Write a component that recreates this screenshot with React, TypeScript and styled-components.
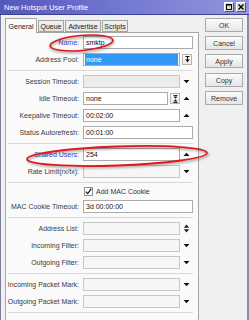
import * as React from "react";
import styled, { createGlobalStyle } from "styled-components";

const GlobalStyle = createGlobalStyle`
  html, body {
    margin: 0;
    padding: 0;
    background: #f0f0f0;
  }
  body {
    font-family: "Liberation Sans", Arial, sans-serif;
  }
`;

type Arrow = "down" | "up" | "updown" | "none";

interface FieldDef {
  label: string;
  value?: string;
  arrow?: Arrow;
  full?: boolean;
  empty?: boolean;
  dark?: boolean;
  highlight?: boolean;
  selected?: boolean;
  dropButton?: boolean;
  idleButton?: boolean;
}

type Item = FieldDef | "sep" | "check";

const tabs = [
  { name: "General", width: 32 },
  { name: "Queue", width: 26 },
  { name: "Advertise", width: 36 },
  { name: "Scripts", width: 26 },
];

const items: Item[] = [
  { label: "Name:", value: "smktp", full: true, highlight: true },
  { label: "Address Pool:", value: "none", selected: true, dropButton: true },
  "sep",
  { label: "Session Timeout:", arrow: "down", empty: true, dark: true },
  { label: "Idle Timeout:", value: "none", idleButton: true, arrow: "up" },
  { label: "Keepalive Timeout:", value: "00:02:00", arrow: "up" },
  { label: "Status Autorefresh:", value: "00:01:00", full: true },
  "sep",
  { label: "Shared Users:", value: "254", arrow: "up", highlight: true },
  { label: "Rate Limit(rx/tx):", arrow: "down", empty: true },
  "sep",
  "check",
  { label: "MAC Cookie Timeout:", value: "3d 00:00:00", full: true },
  "sep",
  { label: "Address List:", arrow: "updown", empty: true },
  { label: "Incoming Filter:", arrow: "down", empty: true },
  { label: "Outgoing Filter:", arrow: "down", empty: true },
  "sep",
  { label: "Incoming Packet Mark:", arrow: "down", empty: true },
  { label: "Outgoing Packet Mark:", arrow: "down", empty: true },
  "sep",
];

function ArrowGlyph({ kind }: { kind: Arrow }) {
  if (kind === "down") {
    return (
      <svg width="7" height="5" viewBox="0 0 7 5">
        <path d="M0.5 1h6L3.5 4.2z" fill="#111" />
      </svg>
    );
  }
  if (kind === "up") {
    return (
      <svg width="7" height="5" viewBox="0 0 7 5">
        <path d="M0.5 4h6L3.5 0.8z" fill="#111" />
      </svg>
    );
  }
  if (kind === "updown") {
    return (
      <svg width="7" height="9" viewBox="0 0 7 9">
        <path d="M0.8 3.8h5.4L3.5 0.6z M0.8 5.2h5.4L3.5 8.4z" fill="#222" />
      </svg>
    );
  }
  return null;
}

function DropGlyph() {
  return (
    <svg width="7" height="7" viewBox="0 0 7 7">
      <path d="M1.5 0.5h4" stroke="#111" strokeWidth="1" />
      <path d="M3.5 1v3" stroke="#111" strokeWidth="1" />
      <path d="M1.2 3.5h4.6L3.5 6.3z" fill="#111" />
    </svg>
  );
}

function SpinGlyph() {
  return (
    <svg width="7" height="8" viewBox="0 0 7 8">
      <path d="M1.5 0.5h4" stroke="#111" strokeWidth="0.9" />
      <path d="M1.6 1.6h3.8L3.5 3.8z" fill="#111" />
      <path d="M1.6 6.4h3.8L3.5 4.2z" fill="#111" />
      <path d="M1.5 7.5h4" stroke="#111" strokeWidth="0.9" />
    </svg>
  );
}

export default function App() {
  return (
    <>
      <GlobalStyle />
      <Window>
        <TitleBar>
          <TitleText>New Hotspot User Profile</TitleText>
          <TitleButtons>
            <CaptionButton>
              <svg width="6" height="6" viewBox="0 0 6 6">
                <path d="M0.5 0.5h5v5h-5z" fill="none" stroke="#000" strokeWidth="1" />
                <path d="M0 1h6" stroke="#000" strokeWidth="1" />
              </svg>
            </CaptionButton>
            <CaptionButton>
              <svg width="6" height="6" viewBox="0 0 6 6">
                <path d="M0.5 0.5l5 5M5.5 0.5l-5 5" stroke="#000" strokeWidth="1.4" />
              </svg>
            </CaptionButton>
          </TitleButtons>
        </TitleBar>
        <Body>
          <Main>
            <TabStrip>
              {tabs.map((t, i) => (
                <Tab key={t.name} $active={i === 0} $w={t.width}>
                  {t.name}
                </Tab>
              ))}
            </TabStrip>
            <Panel>
              {items.map((item, i) => {
                if (item === "sep") return <Separator key={i} />;
                if (item === "check") {
                  return (
                    <CheckRow key={i}>
                      <CheckBox>
                        <svg width="7" height="7" viewBox="0 0 7 7">
                          <path d="M0.8 3.6l1.9 2 3.6-5" fill="none" stroke="#111" strokeWidth="1.2" />
                        </svg>
                      </CheckBox>
                      <CheckLabel>Add MAC Cookie</CheckLabel>
                    </CheckRow>
                  );
                }
                const f = item;
                return (
                  <Row key={i}>
                    <Label $highlight={f.highlight}>{f.label}</Label>
                    <Input
                      $width={f.full ? 110 : f.idleButton ? 85 : 97}
                      $empty={f.empty}
                      $dark={f.dark}
                    >
                      {f.value && <Value $selected={f.selected}>{f.value}</Value>}
                    </Input>
                    {f.dropButton && (
                      <SmallButton>
                        <DropGlyph />
                      </SmallButton>
                    )}
                    {f.idleButton && (
                      <SmallButton>
                        <SpinGlyph />
                      </SmallButton>
                    )}
                    {f.arrow && (
                      <ArrowCell>
                        <ArrowGlyph kind={f.arrow} />
                      </ArrowCell>
                    )}
                  </Row>
                );
              })}
            </Panel>
          </Main>
          <Side>
            <SideButton>OK</SideButton>
            <SideButton>Cancel</SideButton>
            <SideButton>Apply</SideButton>
            <SideButton $spaced>Copy</SideButton>
            <SideButton>Remove</SideButton>
          </Side>
        </Body>
        <Marks width="249" height="320" viewBox="0 0 249 320">
          <defs>
            <filter id="markShadow" x="-20%" y="-50%" width="140%" height="200%">
              <feGaussianBlur stdDeviation="1.2" />
            </filter>
          </defs>
          <g fill="none" strokeLinecap="round">
            <ellipse cx="82" cy="44.5" rx="31.5" ry="7.5" transform="rotate(-5 82 44.5)" stroke="rgba(0,0,0,0.35)" strokeWidth="2" filter="url(#markShadow)" />
            <ellipse cx="81.5" cy="43" rx="31.5" ry="7.5" transform="rotate(-5 81.5 43)" stroke="#e3161b" strokeWidth="1.6" />
            <ellipse cx="118" cy="157.5" rx="90" ry="9.5" transform="rotate(-2 118 157.5)" stroke="rgba(0,0,0,0.35)" strokeWidth="2" filter="url(#markShadow)" />
            <ellipse cx="117" cy="156" rx="90" ry="9.5" transform="rotate(-2 117 156)" stroke="#e3161b" strokeWidth="1.8" />
          </g>
        </Marks>
      </Window>
    </>
  );
}

const Window = styled.div`
  position: relative;
  box-sizing: border-box;
  width: 249px;
  height: 320px;
  overflow: hidden;
  display: flex;
  flex-direction: column;
  background: #f0f0f0;
  box-shadow: inset 1px 0 0 #7c7c9c, inset -2px 0 0 #8a8aa6;
  font-family: "Liberation Sans", Arial, sans-serif;
  font-size: 7px;
  color: #333;
`;

const TitleBar = styled.div`
  box-sizing: border-box;
  height: 15px;
  flex: none;
  display: flex;
  align-items: center;
  padding: 0 3px 0 4px;
  background: linear-gradient(to right, #5257bd, #777cd3 55%, #9196dd);
  border-bottom: 1px solid #3d408f;
`;

const TitleText = styled.div`
  flex: 1;
  color: #fff;
  font-size: 7.5px;
`;

const TitleButtons = styled.div`
  display: flex;
  gap: 2px;
`;

const CaptionButton = styled.div`
  box-sizing: border-box;
  width: 10px;
  height: 10px;
  display: flex;
  align-items: center;
  justify-content: center;
  background: #dcdad4;
  border: 1px solid;
  border-color: #fff #555 #555 #fff;
`;

const Body = styled.div`
  flex: 1;
  min-height: 0;
  display: flex;
  padding: 3px 0 0 5px;
`;

const Main = styled.div`
  width: 194px;
  display: flex;
  flex-direction: column;
`;

const TabStrip = styled.div`
  display: flex;
  align-items: flex-end;
  height: 14px;
  position: relative;
  z-index: 1;
`;

const Tab = styled.div<{ $active?: boolean; $w: number }>`
  box-sizing: border-box;
  width: ${(p) => p.$w}px;
  height: ${(p) => (p.$active ? 15 : 12)}px;
  margin-bottom: ${(p) => (p.$active ? -1 : 0)}px;
  display: flex;
  align-items: center;
  justify-content: center;
  white-space: nowrap;
  border: 1px solid #a4a4a4;
  border-bottom: ${(p) => (p.$active ? "none" : "1px solid #a4a4a4")};
  margin-right: 1px;
  background: ${(p) => (p.$active ? "#fafafa" : "linear-gradient(#f2f2f2, #e2e2e2)")};
  color: #222;
  font-size: 7px;
`;

const Panel = styled.div`
  flex: 1;
  box-sizing: border-box;
  border: 1px solid #a4a4a4;
  border-bottom: none;
  background: #fafafa;
  padding: 3px 0 0 0;
`;

const Row = styled.div`
  display: flex;
  align-items: center;
  height: 13px;
  margin-bottom: 4px;
`;

const Label = styled.div<{ $highlight?: boolean }>`
  width: 73px;
  margin-right: 4px;
  text-align: right;
  white-space: nowrap;
  color: ${(p) => (p.$highlight ? "#3a3ad0" : "#3a3a3a")};
`;

const Input = styled.div<{ $width: number; $empty?: boolean; $dark?: boolean }>`
  box-sizing: border-box;
  width: ${(p) => p.$width}px;
  height: 13px;
  display: flex;
  align-items: center;
  padding: 0 1px;
  border: 1px solid ${(p) => (p.$empty ? "#c6c6c6" : "#ababab")};
  background: ${(p) => (p.$dark ? "#ececec" : p.$empty ? "#f6f6f6" : "#fff")};
  color: #111;
`;

const Value = styled.span<{ $selected?: boolean }>`
  flex: 1;
  align-self: stretch;
  display: flex;
  align-items: center;
  padding-left: 1px;
  background: ${(p) => (p.$selected ? "#3397f3" : "transparent")};
  color: ${(p) => (p.$selected ? "#fff" : "#111")};
`;

const SmallButton = styled.div`
  box-sizing: border-box;
  width: 10px;
  height: 11px;
  margin-left: 2px;
  display: flex;
  align-items: center;
  justify-content: center;
  border: 1px solid #b4b4b4;
  background: linear-gradient(#fdfdfd, #e9e9e9);
`;

const ArrowCell = styled.div`
  width: 13px;
  display: flex;
  align-items: center;
  justify-content: center;
`;

const Separator = styled.div`
  width: 185px;
  height: 1px;
  margin: 1px 0 4px 2px;
  background: #d9d9d9;
`;

const CheckRow = styled.div`
  display: flex;
  align-items: flex-start;
  height: 13px;
  padding-left: 78px;
`;

const CheckBox = styled.div`
  box-sizing: border-box;
  width: 9px;
  height: 9px;
  display: flex;
  align-items: center;
  justify-content: center;
  border: 1px solid #8e8e8e;
  background: #fff;
`;

const CheckLabel = styled.span`
  margin-left: 3px;
  line-height: 9px;
  color: #333;
`;

const Side = styled.div`
  width: 38px;
  margin-left: 6px;
  display: flex;
  flex-direction: column;
  gap: 4px;
`;

const SideButton = styled.div<{ $spaced?: boolean }>`
  box-sizing: border-box;
  height: 14px;
  margin-top: ${(p) => (p.$spaced ? 1 : 0)}px;
  display: flex;
  align-items: center;
  justify-content: center;
  border: 1px solid #a9a9a9;
  background: linear-gradient(#fbfbfb, #e6e6e6);
  color: #333;
  font-size: 7px;
`;

const Marks = styled.svg`
  position: absolute;
  left: 0;
  top: 0;
  pointer-events: none;
`;
